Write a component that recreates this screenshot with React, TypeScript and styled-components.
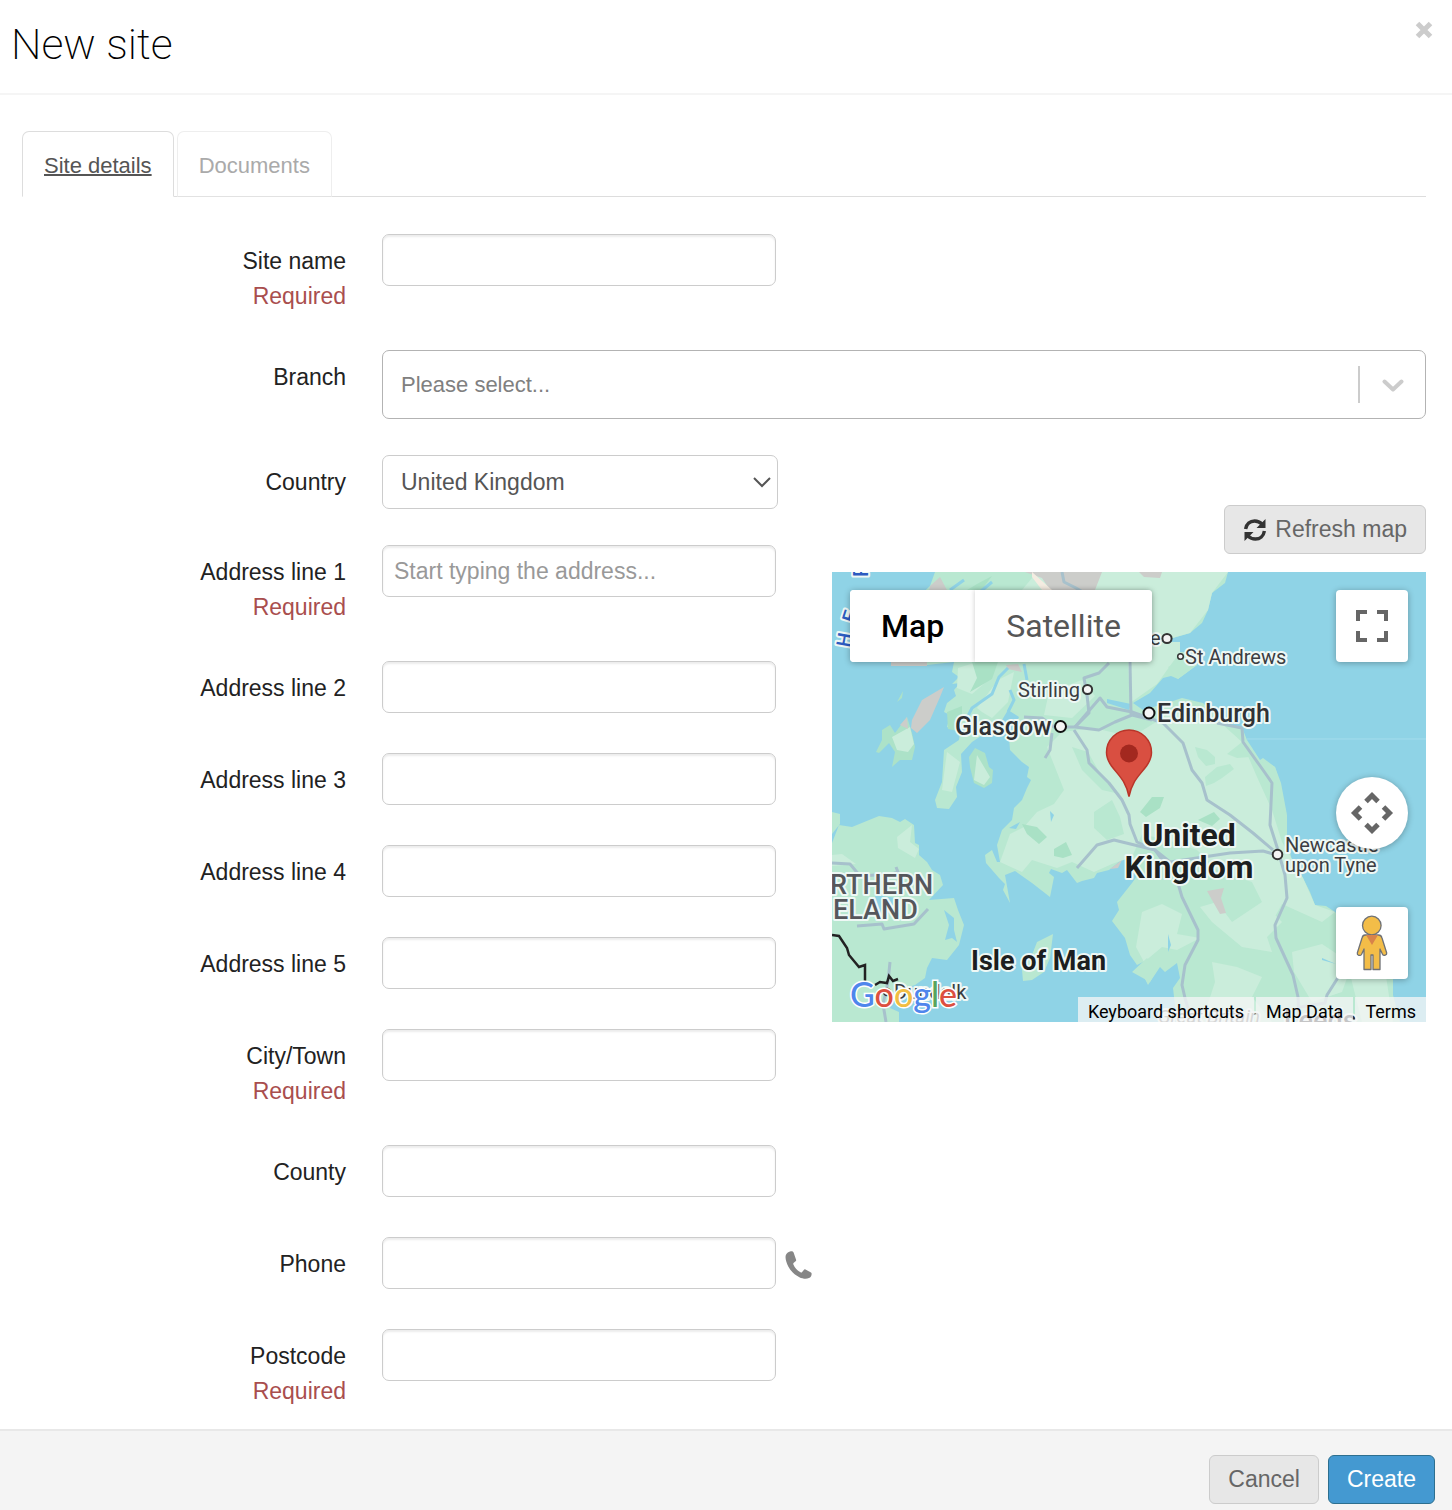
import React from "react";
import styled, { createGlobalStyle } from "styled-components";

const GlobalStyle = createGlobalStyle`
  * { box-sizing: border-box; }
  body {
    margin: 0;
    background: #fff;
    color: #222;
    font-family: "Liberation Sans", Arial, sans-serif;
    font-size: 23px;
  }
  button, input, select { font: inherit; margin: 0; }
`;

const Dialog = styled.main`
  display: flex;
  flex-direction: column;
  min-height: 100vh;
`;

const Header = styled.header`
  display: flex;
  justify-content: space-between;
  align-items: flex-start;
  padding: 16px 14px 21px 11px;
  border-bottom: 2px solid #f5f5f5;
`;

const Title = styled.h1`
  margin: 0;
  color: #000;
  font-family: Roboto, "Liberation Sans", sans-serif;
  font-size: 43px;
  font-weight: 200;
  line-height: 56px;
`;

const CloseButton = styled.button`
  display: flex;
  padding: 4px;
  border: 0;
  background: none;
  color: #ccc;
  cursor: pointer;
`;

const Body = styled.div`
  flex: 1;
  padding: 36px 26px 20px 22px;
`;

const Tabs = styled.nav`
  display: flex;
  gap: 3px;
  border-bottom: 1px solid #ddd;
`;

const Tab = styled.a<{ $active?: boolean }>`
  height: 66px;
  margin-bottom: -1px;
  padding: 0 21px;
  border: 1px solid ${(p) => (p.$active ? "#ddd" : "#eee")};
  border-bottom-color: ${(p) => (p.$active ? "#fff" : "#e2e2e2")};
  border-radius: 7px 7px 0 0;
  background: #fff;
  color: ${(p) => (p.$active ? "#555" : "#aaa")};
  font-size: 22px;
  line-height: 68px;
  text-decoration: ${(p) => (p.$active ? "underline" : "none")};
  text-decoration-thickness: 2px;
`;

const Form = styled.form`
  display: flex;
  flex-direction: column;
  gap: 36px;
  padding-top: 37px;
`;

const Columns = styled.div`
  display: grid;
  grid-template-columns: 790px minmax(0, 1fr);
  gap: 20px;
  @media (max-width: 1100px) { grid-template-columns: minmax(0, 1fr); }
`;

const Fields = styled.div`
  display: flex;
  flex-direction: column;
  gap: 36px;
`;

const Row = styled.div`
  display: grid;
  grid-template-columns: 324px minmax(0, 1fr);
  column-gap: 36px;
  align-items: start;
`;

const Label = styled.label`
  padding-top: 9px;
  line-height: 36px;
  text-align: right;
`;

const Required = styled.span`
  display: block;
  color: #a94e4e;
  line-height: 35px;
`;

const Control = styled.div`
  display: flex;
  align-items: center;
  gap: 9px;
`;

const TextInput = styled.input`
  flex: none;
  width: 394px;
  height: 52px;
  && { margin-bottom: 4px; }
  padding: 0 11px;
  border: 1px solid #ccc;
  border-radius: 7px;
  background: #fff;
  box-shadow: inset 0 2px 2px rgba(0, 0, 0, 0.075);
  color: #555;
  &::placeholder { color: #999; opacity: 1; }
`;

const BranchBox = styled.div`
  display: flex;
  align-items: center;
  height: 69px;
  border: 1px solid #b3b3b3;
  border-radius: 7px;
`;

const BranchInput = styled.input`
  flex: 1;
  min-width: 0;
  height: 60px;
  padding: 0 18px;
  border: 0;
  background: none;
  font-size: 22px;
  &::placeholder { color: #808080; opacity: 1; }
`;

const BranchToggle = styled.button`
  display: flex;
  align-items: center;
  justify-content: center;
  width: 67px;
  height: 37px;
  border: 0;
  border-left: 2px solid #ccc;
  background: none;
  color: #ccc;
`;

const SelectWrap = styled.div`
  position: relative;
  width: 396px;
  svg {
    position: absolute;
    right: 6px;
    top: 21px;
    pointer-events: none;
  }
`;

const Select = styled.select`
  width: 100%;
  height: 54px;
  padding: 0 40px 0 18px;
  border: 1px solid #ccc;
  border-radius: 7px;
  background: #fff;
  color: #555;
  appearance: none;
`;

const MapColumn = styled.div`
  display: flex;
  flex-direction: column;
  align-items: flex-end;
  gap: 18px;
  padding-top: 50px;
`;

const Button = styled.button<{ $primary?: boolean }>`
  display: inline-flex;
  align-items: center;
  gap: 8px;
  height: 49px;
  padding: 0 18px;
  border: 1px solid ${(p) => (p.$primary ? "#2d6f8f" : "#ccc")};
  border-radius: 6px;
  background: ${(p) => (p.$primary ? "#4499d1" : "#e7e7e7")};
  color: ${(p) => (p.$primary ? "#fff" : "#666")};
`;

const MapFrame = styled.section`
  position: relative;
  width: 100%;
  height: 450px;
  overflow: hidden;
  background: #8fd3e6;
  font-family: Roboto, sans-serif;
`;

const MapDrawing = styled.svg`
  display: block;
  width: 100%;
  height: 100%;
`;

const MapTypes = styled.div`
  position: absolute;
  top: 18px;
  left: 18px;
  display: flex;
  border-radius: 4px;
  background: #fff;
  box-shadow: 0 1px 6px rgba(0, 0, 0, 0.3);
`;

const MapType = styled.button<{ $active?: boolean }>`
  height: 72px;
  padding: 0 31px;
  border: 0;
  border-radius: 4px;
  background: #fff;
  color: ${(p) => (p.$active ? "#000" : "#565656")};
  font-size: 32px;
  font-weight: ${(p) => (p.$active ? 500 : 400)};
  & + & {
    border-radius: 0 4px 4px 0;
    box-shadow: -1px 0 4px rgba(0, 0, 0, 0.15);
  }
`;

const MapControls = styled.div`
  position: absolute;
  top: 18px;
  right: 18px;
  bottom: 43px;
  display: flex;
  flex-direction: column;
  gap: 58px;
`;

const MapControl = styled.button<{ $round?: boolean }>`
  display: flex;
  align-items: center;
  justify-content: center;
  width: 72px;
  height: 72px;
  padding: 0;
  border: 0;
  border-radius: ${(p) => (p.$round ? "50%" : "4px")};
  background: #fff;
  box-shadow: 0 1px 6px rgba(0, 0, 0, 0.3);
  color: #666;
  &:first-child { margin-bottom: auto; }
`;

const Attribution = styled.div`
  position: absolute;
  right: 0;
  bottom: 0;
  display: flex;
  gap: 2px;
  color: #000;
  font-size: 18px;
  line-height: 25px;
`;

const attributionItem = `
  height: 25px;
  padding: 2px 10px 0;
  border: 0;
  background: rgba(245, 245, 245, 0.75);
  color: #000;
  line-height: 25px;
  text-decoration: none;
`;

const AttributionButton = styled.button`${attributionItem}`;
const AttributionLink = styled.a`${attributionItem}`;

const Footer = styled.footer`
  display: flex;
  justify-content: flex-end;
  gap: 9px;
  padding: 24px 17px 6px;
  border-top: 2px solid #e8e8e8;
  background: #f4f4f4;
`;

type FieldProps = {
  id: string;
  label: string;
  required?: boolean;
  placeholder?: string;
  type?: string;
  children?: React.ReactNode;
};

function Field({ id, label, required, placeholder, type = "text", children }: FieldProps) {
  return (
    <Row>
      <Label htmlFor={id}>
        {label}
        {required && <Required>Required</Required>}
      </Label>
      <Control>
        <TextInput id={id} type={type} placeholder={placeholder} />
        {children}
      </Control>
    </Row>
  );
}

const RefreshIcon = () => (
  <svg width="24" height="24" viewBox="0 0 24 24" aria-hidden="true">
    <g fill="none" stroke="#333" strokeWidth="3.4">
      <path d="M2.6 11C3.4 6 7 3 11.600 3c3 0 5.300 1 7.400 3.200" />
      <path d="M21.400 13c-.8 5-4.400 8-9 8-3 0-5.300-1-7.400-3.200" />
    </g>
    <path d="M22.500 1v9h-9z M1.500 23v-9h9z" fill="#333" />
  </svg>
);

const PhoneIcon = () => (
  <svg width="28" height="30" viewBox="0 0 28 30" aria-hidden="true">
    <path
      d="M6 .7C4 1 1.600 2.500.8 5c-.8 3 .4 7.300 2.600 11.500 2.600 4.800 6.800 8.900 11.500 11.200 3.300 1.600 7.300 2.100 9.900.9 2-.9 3-2.800 2.800-4.800-.1-.7-.4-1-1.100-1.300l-5.300-2.800c-.7-.3-1.200-.2-1.700.4l-1.700 2.200c-.5.6-1 .7-1.700.3-3.400-1.900-6-4.900-7.400-8.200-.3-.7-.2-1.200.4-1.700l1.900-1.500c.6-.5.7-1 .5-1.700L8.900 2C8.400 1 7.400.5 6 .7z"
      fill="#868686"
    />
  </svg>
);

const Pegman = () => (
  <svg width="32" height="56" viewBox="0 0 32 56" aria-hidden="true">
    <g fill="#f3bd48" stroke="#6f7175" strokeWidth="1.300" strokeLinejoin="round">
      <path d="M9 20h13.500c2 0 3 1 3.500 3l4.700 15c.4 2.200-3 3.300-4.200 1.300L24 34v20.500h-7V40h-2v14.500H8V34l-2.500 5.500C4.300 41.300.8 40.300 1.300 38L6 23c.5-2 1.200-3 3-3z" />
      <circle cx="15.800" cy="10.500" r="9.300" />
    </g>
    <path d="M10 20h12l-6 10z" fill="#d8834a" />
  </svg>
);

const land =
  "M103 0L98 14L60 50L59 92L95 93L122 90L120 100L127 105L120 112L128 111L122 118L124 124L115 131L112 140L118 143L115 155L128 160L127 168L112 178L110 210L103 228L105 236L117 237L125 225L124 215L130 200L129 182L140 170L152 162L164 158L176 138L187 145L180 160L177 165L178 178L190 190L197 195L195 205L199 208L195 216L190 228L182 236L180 248L170 258L165 273L168 290L165 290L160 278L153 283L154 291L167 306L173 312L171 318L178 331L173 303L183 299L200 311L218 325L222 305L217 301L219 297L230 301L235 298L245 311L250 309L262 306L265 301L277 298L292 286L308 300L300 311L285 330L287 338L280 349L293 366L298 383L305 393L315 388L311 403L316 413L328 395L333 400L345 391L348 406L341 416L345 450H568L561 423L561 406L528 365L503 340L494 334L483 333L478 320L471 306L460 289L455 266L455 243L448 223L448 211L443 195L431 186L428 188L415 168L411 158L391 151L371 131L350 126L338 130L311 138L301 131L318 121L331 106L339 104L346 107L365 93L356 80L348 80L348 70L326 70L341 66L358 61L370 51L376 38L380 21L393 11L396 0Z";

const ireland =
  "M0 271L7 253L20 255L47 244L60 246L68 250L73 247L82 253L83 271L87 273L87 283L95 290L100 298L108 303L111 313L97 328L122 326L126 338L132 353L127 373L115 388L100 386L95 396L93 406L83 413L63 419L58 436L67 440V450H0ZM0 240L8 242V252L0 262Z";

const palePatches =
  "M205 0L190 18L230 18L260 70L296 90L298 131L325 112L348 80L348 70L326 70L358 61L376 38L380 21L396 0ZM126 96L145 90L165 92L160 105L140 122L125 116ZM145 136L166 108L182 100L176 130L160 146L150 140ZM217 120L250 108L263 124L240 146L212 143ZM215 175L230 160L262 156L300 165L340 140L390 152L410 170L425 205L440 238L450 270L471 306L483 333L503 340L490 350L450 332L440 350L420 310L388 300L365 278L342 270L310 262L300 285L280 292L262 300L240 290L225 296L200 288L190 300L168 290L178 262L192 255L205 240L222 232L232 218Z M310 340L330 332L350 342L345 362L368 366L345 378L330 375L312 390L304 375ZM368 335L385 330L400 350L430 330L450 350L435 365L440 380L410 375L380 350ZM380 390L405 395L430 405L420 425L440 450H370L383 410ZM460 380L490 372L520 392L510 420L480 430L462 400ZM510 365L550 378L561 450H530L520 410ZM65 265L80 253L78 270L87 277L83 286L66 276ZM0 283L10 282L24 292L0 294ZM115 180L128 190L120 220L110 218ZM145 183L158 205L152 213L142 208ZM60 165L78 155L82 172L76 180L65 178Z";

const deepPatches =
  "M115 140L130 134L130 160L116 157ZM190 252L205 255L215 265L207 272L195 262ZM222 277L234 270L240 283L231 286L222 284ZM308 240L320 225L332 225L328 236L314 245ZM366 248L382 240L388 247L380 254ZM140 90L166 90L160 107L138 120L145 106ZM115 30L145 12L160 4L148 20Z";

const softPatches =
  "M363 175L375 178L383 185L383 192L374 194L366 185ZM373 205L385 195L398 192L402 197L390 206L382 211L374 214ZM336 95L356 85L365 93L346 107ZM430 188L443 195L449 211L455 243L444 222L436 204ZM300 400L315 386L325 398L318 410ZM395 182L410 170L418 185L405 186ZM262 240L280 228L288 245L292 262L275 268L262 256ZM240 175L256 180L270 205L288 222L270 218L250 198Z";

const uplands =
  "M98 14L108 5L116 20L95 30ZM193 0H270L263 18H218L210 6ZM59 90H95V94H59ZM174 93L186 92L190 100L176 97ZM307 0H330L328 6L312 5ZM375 319L392 316L389 326L394 341L388 342L380 328ZM278 297L290 288L286 296Z";

const roads = [
  "M230 0l2 10 12 6 10 6",
  "M277 91L267 101L252 106L255 123L257 141L243 155",
  "M192 145L210 146L222 155L243 155L267 158L283 150L300 143L320 148",
  "M220 161L218 178L213 186",
  "M242 158L255 178L257 191L277 211L290 228L297 243L298 252L305 270L323 278L345 308L350 325L366 358L366 368L353 393L350 413L353 426L360 450",
  "M243 155L268 126L275 135L300 140L331 151L351 171L360 198L370 211L375 228L398 243L421 261L441 278",
  "M298 90L299 142",
  "M385 151L410 156L411 170L431 198L440 211L438 253L445 275L453 303L455 326L443 353L444 366L461 403L466 425L467 450",
  "M245 296L265 273L282 268L323 278L338 290L398 281L431 279L445 283",
  "M507 404L495 423L493 431L468 435",
  "M0 291L18 292L28 304L60 302L66 300L64 295",
  "M25 354L50 352L52 357L82 352L96 337",
  "M58 390L56 410L51 432L54 450",
];

const haloText = {
  paintOrder: "stroke",
  stroke: "#eef8f5",
  strokeWidth: 4,
  strokeLinejoin: "round",
} as const;

function MapArt() {
  return (
    <MapDrawing viewBox="0 0 594 450" preserveAspectRatio="xMidYMid slice" role="img" aria-label="Map of the United Kingdom">
      <rect width="594" height="450" fill="#8fd3e6" />
      <path d={land} fill="#b9e8d1" />
      <path d={ireland} fill="#b9e8d1" />
      <path d="M137 185L143 176L153 181L157 195L161 198L160 211L152 216L142 211L138 195ZM50 158L58 153L63 161L75 145L80 161L83 175L80 188L68 188L60 195L63 180L57 171L47 181L44 180L50 168ZM71 119L65 130L70 126Z" fill="#ace2c8" />
      <path d="M221 362L205 370L200 383L190 398L191 409L200 408L212 400L218 386Z" fill="#b9e8d1" />
      <path d={palePatches} fill="#caeddb" />
      <path d={softPatches} fill="#b9e8d1" />
      <path d={deepPatches} fill="#a9e1c5" />
      <path d={uplands} fill="#cccdca" />
      <path d="M112 115L90 128L80 148L79 156L85 161L98 148L108 125ZM75 145L68 153L76 157Z" fill="#cccdca" />
      <path d="M200 0l20 18h-10l-10-13z" fill="#f4ece1" />
      <path d="M112 338L122 346L122 358L125 370L120 366L113 368L117 353ZM43 323L64 326L60 340L45 348ZM177 256L188 250L184 257ZM218 239L222 243L219 250ZM336 362L339 373L336 380ZM490 386L504 392L490 388ZM275 127L299 132L297 138L275 131Z" fill="#8fd3e6" />
      <g fill="none" stroke="#8fd3e6" strokeWidth="3">
        <path d="M134 148L140 136L160 122L167 105L176 96M176 140L182 128L178 118M192 92L195 108M130 160L140 148L158 156M118 18L132 8M148 20L160 10" />
      </g>
      <g fill="none" stroke="#a7c1cc" strokeWidth="3" strokeLinejoin="round">
        {roads.map((d) => <path key={d} d={d} />)}
      </g>
      <path d="M415 167H594" stroke="#a4dced" strokeWidth="1" />
      <path d="M0 363L7 364L15 376L17 383L27 395L33 393L33 410M43 413L48 410L55 411L57 404L61 409L66 407" fill="none" stroke="#222" strokeWidth="2.500" />

      <g fontFamily="Roboto, sans-serif" fill="#3b3d42">
        <g fill="#2c5bc0" fontSize="20" fontWeight="500">
          <text {...haloText} transform="translate(18 76) rotate(-80)">H</text>
          <text {...haloText} transform="translate(23 52) rotate(-72)">E</text>
          <text {...haloText} transform="translate(36 5) rotate(-90)">F</text>
        </g>
        <g fontSize="20">
          <text {...haloText} x="318" y="73">e</text>
          <text {...haloText} x="353" y="92">St Andrews</text>
          <text {...haloText} x="186" y="125">Stirling</text>
          <text {...haloText} x="453" y="280">Newcastle</text>
          <text {...haloText} x="453" y="300">upon Tyne</text>
          <text {...haloText} x="62" y="427">Dundalk</text>
          <text {...haloText} x="326" y="451" fontSize="19" fontStyle="italic" fill="#777">Great Britain</text>
        </g>
        <g fontSize="25" fontWeight="500" fill="#303236">
          <text {...haloText} x="123" y="163">Glasgow</text>
          <text {...haloText} x="325" y="150">Edinburgh</text>
          <text {...haloText} x="452" y="458" fontSize="27">Leeds</text>
        </g>
        <g fontSize="27" fontWeight="500" fill="#55575c">
          <text {...haloText} x="-2" y="322">RTHERN</text>
          <text {...haloText} x="1" y="347">ELAND</text>
        </g>
        <g fontWeight="700" fill="#1c1e20">
          <text {...haloText} x="139" y="398" fontSize="27">Isle of Man</text>
          <g fontSize="32" textAnchor="middle">
            <text {...haloText} x="357" y="274">United</text>
            <text {...haloText} x="357" y="306">Kingdom</text>
          </g>
        </g>
      </g>

      <g fill="#f4f4f4" stroke="#333" strokeWidth="2">
        <circle cx="335" cy="66.500" r="4.600" />
        <circle cx="348.500" cy="84.500" r="2.800" strokeWidth="1.500" />
        <circle cx="255.500" cy="117.500" r="4.600" />
        <circle cx="228.500" cy="154.500" r="5.500" stroke="#111" />
        <circle cx="317" cy="141" r="5.500" stroke="#111" />
        <circle cx="445.500" cy="282.500" r="4.800" />
        <circle cx="55" cy="420" r="3.500" strokeWidth="1.500" />
      </g>

      <path d="M297 224.500C294 209 287 204 279.500 194C276 189 274.500 186 274.500 180.500a22.500 22.500 0 0 1 45 0c0 5.500-1.500 8.500-5 13.500-7.500 10-14.500 15-17.500 30.500z" fill="#d94f41" stroke="#b93529" strokeWidth="1.500" />
      <circle cx="297" cy="181.500" r="9" fill="#a3281f" />

      <text x="18" y="435" fontFamily="Lato, sans-serif" fontSize="34" fontWeight="500" stroke="#fff" strokeWidth="3" paintOrder="stroke">
        <tspan fill="#4f86ec">G</tspan><tspan fill="#dc5040">o</tspan><tspan fill="#f1bd42">o</tspan><tspan fill="#4f86ec">g</tspan><tspan fill="#58a55c">l</tspan><tspan fill="#dc5040">e</tspan>
      </text>
    </MapDrawing>
  );
}

export default function App() {
  return (
    <>
      <GlobalStyle />
      <Dialog>
        <Header>
          <Title>New site</Title>
          <CloseButton type="button" aria-label="Close">
            <svg width="20" height="20" viewBox="0 0 20 20" aria-hidden="true">
              <path d="M3.500 3.500l13 13M16.500 3.500l-13 13" stroke="currentColor" strokeWidth="5" />
            </svg>
          </CloseButton>
        </Header>

        <Body>
          <Tabs>
            <Tab href="#details" $active>Site details</Tab>
            <Tab href="#documents">Documents</Tab>
          </Tabs>

          <Form id="site-form">
            <Field id="site-name" label="Site name" required />
            <Row>
              <Label htmlFor="branch">Branch</Label>
              <BranchBox>
                <BranchInput id="branch" role="combobox" aria-expanded="false" placeholder="Please select..." />
                <BranchToggle type="button" aria-label="Show branches">
                  <svg width="22" height="14" viewBox="0 0 22 14" aria-hidden="true">
                    <path d="M2.500 3.500L11 11.500 19.500 3.500" fill="none" stroke="currentColor" strokeWidth="4" strokeLinecap="round" strokeLinejoin="round" />
                  </svg>
                </BranchToggle>
              </BranchBox>
            </Row>

            <Columns>
              <Fields>
                <Row>
                  <Label htmlFor="country">Country</Label>
                  <SelectWrap>
                    <Select id="country" defaultValue="uk">
                      <option value="uk">United Kingdom</option>
                    </Select>
                    <svg width="20" height="13" viewBox="0 0 20 13" aria-hidden="true">
                      <path d="M2 2l8 8 8-8" fill="none" stroke="#555" strokeWidth="2" />
                    </svg>
                  </SelectWrap>
                </Row>
                <Field id="address-1" label="Address line 1" required placeholder="Start typing the address..." />
                <Field id="address-2" label="Address line 2" />
                <Field id="address-3" label="Address line 3" />
                <Field id="address-4" label="Address line 4" />
                <Field id="address-5" label="Address line 5" />
                <Field id="city" label="City/Town" required />
                <Field id="county" label="County" />
                <Field id="phone" label="Phone" type="tel">
                  <PhoneIcon />
                </Field>
                <Field id="postcode" label="Postcode" required />
              </Fields>

              <MapColumn>
                <Button type="button">
                  <RefreshIcon />
                  Refresh map
                </Button>
                <MapFrame aria-label="Site location">
                  <MapArt />
                  <MapTypes>
                    <MapType type="button" $active>Map</MapType>
                    <MapType type="button">Satellite</MapType>
                  </MapTypes>
                  <MapControls>
                    <MapControl type="button" aria-label="Toggle fullscreen">
                      <svg width="32" height="32" viewBox="0 0 32 32" aria-hidden="true">
                        <path d="M2 11V2h9M21 2h9v9M30 21v9h-9M11 30H2v-9" fill="none" stroke="currentColor" strokeWidth="4" />
                      </svg>
                    </MapControl>
                    <MapControl type="button" $round aria-label="Map camera controls">
                      <svg width="44" height="44" viewBox="0 0 44 44" aria-hidden="true">
                        <path d="M16 10.500L22 4.500 28 10.500M16 33.500l6 6 6-6M10.500 16L4.500 22l6 6M33.500 16l6 6-6 6" fill="none" stroke="currentColor" strokeWidth="5" />
                      </svg>
                    </MapControl>
                    <MapControl type="button" aria-label="Open Street View">
                      <Pegman />
                    </MapControl>
                  </MapControls>
                  <Attribution>
                    <AttributionButton type="button">Keyboard shortcuts</AttributionButton>
                    <AttributionButton type="button">Map Data</AttributionButton>
                    <AttributionLink href="#terms">Terms</AttributionLink>
                  </Attribution>
                </MapFrame>
              </MapColumn>
            </Columns>
          </Form>
        </Body>

        <Footer>
          <Button type="button">Cancel</Button>
          <Button type="submit" form="site-form" $primary>Create</Button>
        </Footer>
      </Dialog>
    </>
  );
}
